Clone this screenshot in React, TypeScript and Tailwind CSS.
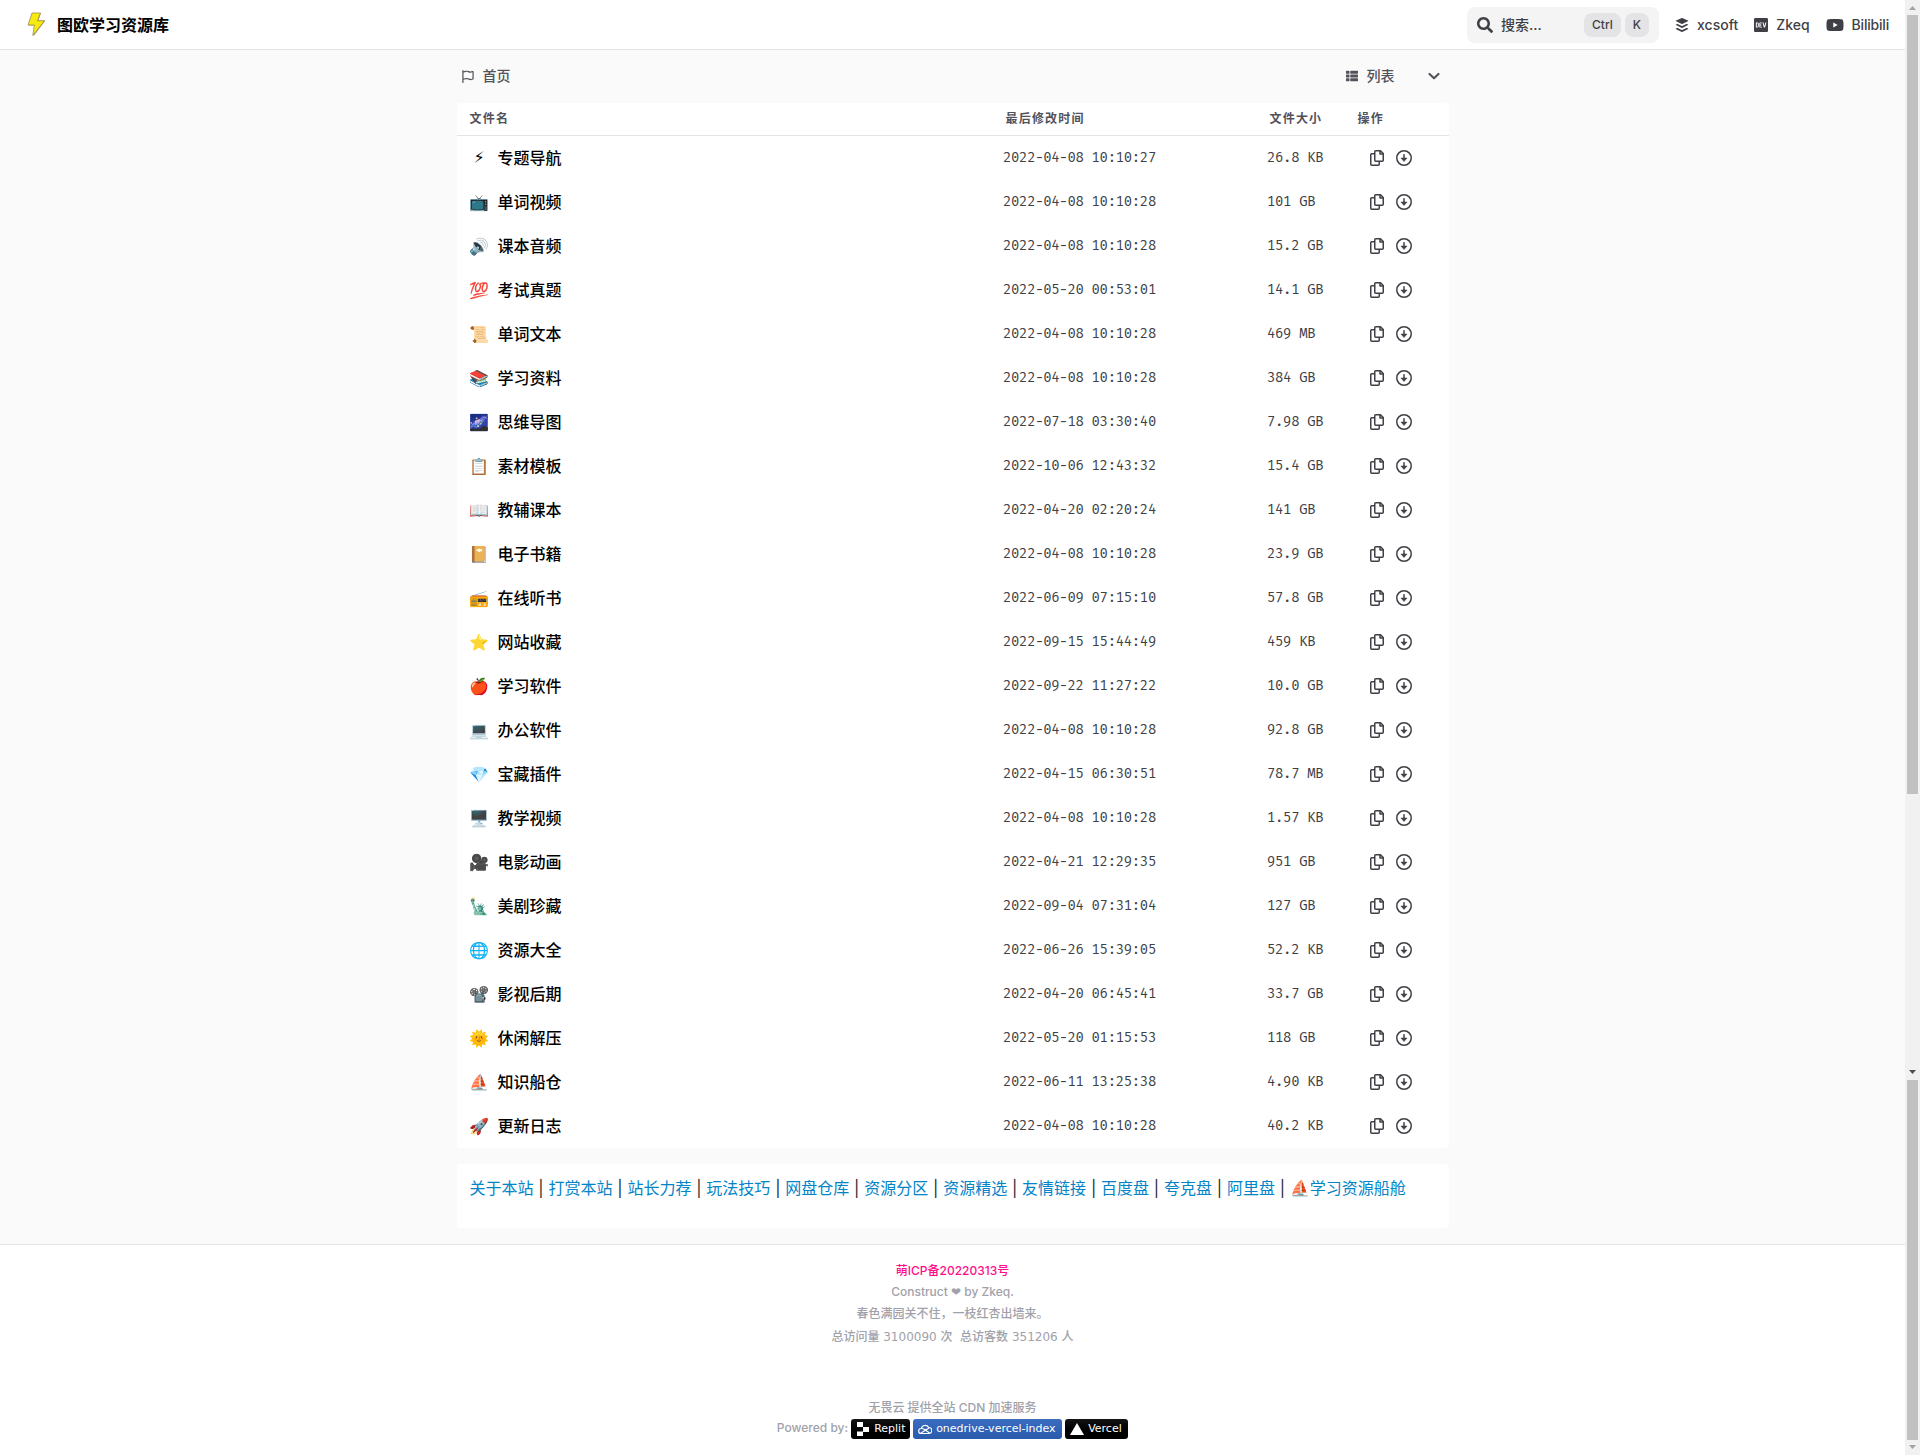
import React from "react";
import { FaSearch, FaBuffer, FaDev, FaYoutube, FaThList } from "react-icons/fa";
import { FaRegFlag } from "react-icons/fa6";

const files: [string, string, string, string][] = [
  ["⚡", "专题导航", "2022-04-08 10:10:27", "26.8 KB"],
  ["📺", "单词视频", "2022-04-08 10:10:28", "101 GB"],
  ["🔊", "课本音频", "2022-04-08 10:10:28", "15.2 GB"],
  ["💯", "考试真题", "2022-05-20 00:53:01", "14.1 GB"],
  ["📜", "单词文本", "2022-04-08 10:10:28", "469 MB"],
  ["📚", "学习资料", "2022-04-08 10:10:28", "384 GB"],
  ["🌌", "思维导图", "2022-07-18 03:30:40", "7.98 GB"],
  ["📋", "素材模板", "2022-10-06 12:43:32", "15.4 GB"],
  ["📖", "教辅课本", "2022-04-20 02:20:24", "141 GB"],
  ["📔", "电子书籍", "2022-04-08 10:10:28", "23.9 GB"],
  ["📻", "在线听书", "2022-06-09 07:15:10", "57.8 GB"],
  ["⭐", "网站收藏", "2022-09-15 15:44:49", "459 KB"],
  ["🍎", "学习软件", "2022-09-22 11:27:22", "10.0 GB"],
  ["💻", "办公软件", "2022-04-08 10:10:28", "92.8 GB"],
  ["💎", "宝藏插件", "2022-04-15 06:30:51", "78.7 MB"],
  ["🖥️", "教学视频", "2022-04-08 10:10:28", "1.57 KB"],
  ["🎥", "电影动画", "2022-04-21 12:29:35", "951 GB"],
  ["🗽", "美剧珍藏", "2022-09-04 07:31:04", "127 GB"],
  ["🌐", "资源大全", "2022-06-26 15:39:05", "52.2 KB"],
  ["📽️", "影视后期", "2022-04-20 06:45:41", "33.7 GB"],
  ["🌞", "休闲解压", "2022-05-20 01:15:53", "118 GB"],
  ["⛵", "知识船仓", "2022-06-11 13:25:38", "4.90 KB"],
  ["🚀", "更新日志", "2022-04-08 10:10:28", "40.2 KB"],
];

const links = ["关于本站", "打赏本站", "站长力荐", "玩法技巧", "网盘仓库", "资源分区", "资源精选", "友情链接", "百度盘", "夸克盘", "阿里盘", "⛵学习资源船舱"];

function CopyIcon() {
  return (
    <svg className="h-4 w-[14px]" viewBox="0 0 14 16" fill="none" stroke="currentColor" strokeWidth="1.500" strokeLinejoin="round">
      <path d="M5.750.750H10.500L13.250 3.500V10.250a1 1 0 0 1-1 1H5.750a1 1 0 0 1-1-1V1.750a1 1 0 0 1 1-1z" />
      <path d="M10 1v3h3" />
      <path d="M4.500 3.750H1.750a1 1 0 0 0-1 1v9.500a1 1 0 0 0 1 1H8.250a1 1 0 0 0 1-1V11.500" />
    </svg>
  );
}

function DownloadIcon() {
  return (
    <svg className="ml-3 size-4" viewBox="0 0 16 16">
      <circle cx="8" cy="8" r="7.250" fill="none" stroke="currentColor" strokeWidth="1.500" />
      <path d="M8 4.750v4" stroke="currentColor" strokeWidth="1.500" strokeLinecap="round" />
      <path d="M4.900 8h6.200L8 11.500z" fill="currentColor" stroke="currentColor" strokeWidth="0.500" strokeLinejoin="round" />
    </svg>
  );
}

function Header() {
  return (
    <header className="flex h-[50px] shrink-0 items-center justify-between border-b border-[#e4e4e7] bg-white pr-4 pl-6">
      <div className="flex items-center">
        <svg className="h-[26px] w-6" viewBox="0 0 24 26">
          <path d="M9 1h8l-2.500 7.500H21.500L9.500 24.500l1.500-11H4.500z" fill="#b9a98a" />
          <path d="M8 1h8.500L13.500 8.800H20.500L8.800 23.500l1.500-10.500H4z" fill="#f7ea10" stroke="#8f8148" strokeWidth="0.700" />
        </svg>
        <span className="ml-[9px] text-base font-bold text-black">图欧学习资源库</span>
      </div>
      <div className="flex items-center text-sm font-medium">
        <div className="flex h-9 w-48 items-center rounded-lg bg-[#f4f4f5] px-[10px]">
          <FaSearch className="size-4" />
          <span className="ml-2 flex-1">搜索...</span>
          <span className="flex h-6 items-center rounded-lg bg-[#e4e4e7] px-2 text-xs">Ctrl</span>
          <span className="ml-1 flex h-6 items-center rounded-lg bg-[#e4e4e7] px-2 text-xs">K</span>
        </div>
        <FaBuffer className="ml-4 h-4 w-[14px]" />
        <span className="ml-2">xcsoft</span>
        <FaDev className="ml-4 h-4 w-[14px]" />
        <span className="ml-2">Zkeq</span>
        <FaYoutube className="ml-4 h-4 w-[18px]" />
        <span className="ml-2 tracking-[-0.2px]">Bilibili</span>
      </div>
    </header>
  );
}

function Scrollbar() {
  return (
    <div className="flex w-[15px] shrink-0 flex-col items-center bg-[#f1f1f1]">
      <svg className="h-[15px] w-[15px]" viewBox="0 0 15 15"><path d="M4 10h7L7.500 6z" fill="#a3a3a3" /></svg>
      <div className="h-[779px] w-[11px] bg-[#c1c1c1]" />
      <div className="flex-1" />
      <svg className="h-[15px] w-[15px]" viewBox="0 0 15 15"><path d="M4 5h7L7.500 9z" fill="#505050" /></svg>
      <div className="h-[360px] w-[11px] bg-[#c1c1c1]" />
      <svg className="h-[15px] w-[15px]" viewBox="0 0 15 15"><path d="M4 5h7L7.500 9z" fill="#a3a3a3" /></svg>
    </div>
  );
}

function Badge({ label, tone, width, children }: { label: string; tone: string; width: string; children: React.ReactNode }) {
  return (
    <span className={"flex h-5 items-center rounded-[3px] pl-[5px] font-['DejaVu_Sans',sans-serif] text-[11px] font-normal text-white " + tone + " " + width}>
      <svg className="mr-1 size-[14px] shrink-0" viewBox="0 0 14 14">{children}</svg>
      {label}
    </span>
  );
}

export default function App() {
  return (
    <div className="flex h-[1455px] w-[1920px] overflow-hidden bg-[#fafafa] font-['Inter','Noto_Sans_CJK_SC',sans-serif] text-[#3f3f46]">
      <div className="flex w-[1905px] flex-col">
        <Header />
        <main className="mx-auto w-[992px] flex-1">
          <div className="flex h-[53px] items-center justify-between pr-[7px] pb-px pl-[5px] text-sm font-medium">
            <div className="flex items-center text-[#52525b]">
              <FaRegFlag className="h-[13px] w-3" />
              <span className="ml-[9px]">首页</span>
            </div>
            <div className="flex items-center text-[#52525b]">
              <FaThList className="size-3" />
              <span className="ml-[9px]">列表</span>
              <svg className="ml-[31px] size-4" viewBox="0 0 16 16" fill="none" stroke="currentColor" strokeWidth="2.200" strokeLinecap="round" strokeLinejoin="round"><path d="M3.500 6l4.500 4.200L12.500 6" /></svg>
            </div>
          </div>
          <div className="rounded bg-white">
            <div className="flex h-[33px] items-center border-b border-[#e4e4e7] pl-[13px] text-xs font-bold tracking-widest text-[#52525b]">
              <span className="w-[536px]">文件名</span>
              <span className="w-[264px]">最后修改时间</span>
              <span className="w-[88px]">文件大小</span>
              <span>操作</span>
            </div>
            {files.map(([icon, name, time, size]) => (
              <div key={name} className="flex h-11 items-center pl-3">
                {icon === "⚡" ? (
                  <span className="w-[29px] pl-[5px] font-['DejaVu_Sans',sans-serif] text-base text-black">{icon}</span>
                ) : (
                  <span className="w-[29px] text-base text-black">{icon}</span>
                )}
                <span className="w-[505.500px] text-base font-medium text-black">{name}</span>
                <span className="w-[264px] pb-px font-['Fira_Mono','DejaVu_Sans_Mono',monospace] text-sm tracking-tight">{time}</span>
                <span className="w-[102.500px] pb-px font-['Fira_Mono','DejaVu_Sans_Mono',monospace] text-sm tracking-tight">{size}</span>
                <CopyIcon />
                <DownloadIcon />
              </div>
            ))}
          </div>
          <div className="mt-4 h-16 rounded bg-white pt-3 pl-[13px] text-base whitespace-pre text-[#24292f] [word-spacing:0.300px]">
            {links.map((l, i) => (
              <React.Fragment key={l}>
                {i > 0 && " | "}
                <span className="text-[#0284c7]">{l}</span>
              </React.Fragment>
            ))}
          </div>
        </main>
        <footer className="flex h-[211px] shrink-0 flex-col items-center border-t border-[#e4e4e7] bg-white pt-[18px] text-xs font-medium text-[#a1a1aa]">
          <div className="h-[21px] text-[#ff0f87]">萌ICP备20220313号</div>
          <div className="h-[22px]">Construct <span className="font-['DejaVu_Sans',sans-serif]">❤</span> by Zkeq.</div>
          <div className="h-[23px]">春色满园关不住，一枝红杏出墙来。</div>
          <div className="h-[71px] font-['DejaVu_Sans','Noto_Sans_CJK_SC',sans-serif]">总访问量 3100090 次&nbsp; 总访客数 351206 人</div>
          <div className="h-[19px]">无畏云 提供全站 CDN 加速服务</div>
          <div className="flex h-5 items-center gap-[3px]">
            <span className="pb-[3px]">Powered by:</span>
            <Badge label="Replit" tone="bg-linear-to-b from-[#151515] to-black" width="w-[59px]">
              <path d="M1 0h6v5H1zM7 5h6v5H7zM1 9.500h6V14H1z" fill="white" />
            </Badge>
            <Badge label="onedrive-vercel-index" tone="bg-linear-to-b from-[#3a6cc0] to-[#2a5aab]" width="w-[149px]">
              <path d="M3 11.500a2.500 2.500 0 0 1 .3-5A4 4 0 0 1 10.700 5.500a3 3 0 0 1 .3 6zM3.500 6.500c2 0 3 .8 4.500 2l3.500 2.500M3 11l8-5" fill="none" stroke="white" strokeWidth="1.100" />
            </Badge>
            <Badge label="Vercel" tone="bg-linear-to-b from-[#151515] to-black" width="w-[63px]">
              <path d="M7 1l7 12H0z" fill="white" />
            </Badge>
          </div>
        </footer>
      </div>
      <Scrollbar />
    </div>
  );
}
